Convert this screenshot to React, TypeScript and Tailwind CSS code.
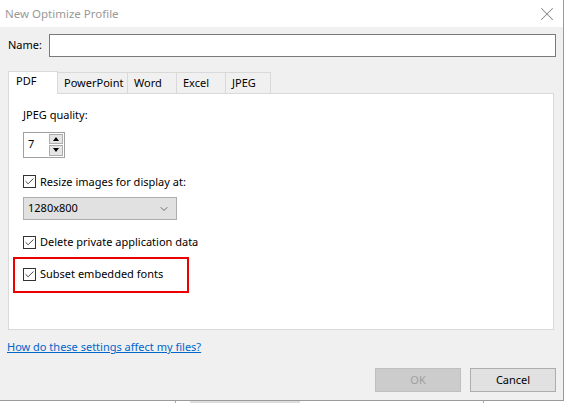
import { X, ChevronDown, Check } from "lucide-react";

const font = { fontFamily: '"Noto Sans", "Open Sans", sans-serif' };

function CheckBox({ label }: { label: string }) {
  return (
    <label className="flex items-center gap-[4px] text-[11px] text-[#000]">
      <span className="grid h-[13px] w-[13px] place-items-center border border-[#333] bg-white">
        <Check className="h-[11px] w-[11px] text-[#333]" strokeWidth={2} />
      </span>
      {label}
    </label>
  );
}

const tabs = ["PDF", "PowerPoint", "Word", "Excel", "JPEG"];
const tabWidths = ["w-[50px]", "w-[71px]", "w-[50px]", "w-[50px]", "w-[46px]"];

export default function App() {
  return (
    <div className="relative h-[403px] w-[565px] overflow-hidden bg-white" style={font}>
      <div className="flex h-[401px] w-[564px] flex-col border-r border-b border-[#9a9a9a] bg-[#f0f0f0]">
        {/* title bar */}
        <div className="flex h-[27px] items-center justify-between bg-white pl-[5px] pr-[5px]">
          <span className="text-[11.5px] text-[#999]">New Optimize Profile</span>
          <X className="h-[22px] w-[22px] text-[#888]" strokeWidth={1.1} />
        </div>

        {/* name */}
        <div className="mt-[7px] flex items-center pl-[8px] pr-[7px]">
          <span className="w-[41px] text-[11px] text-black">Name:</span>
          <div className="h-[23px] flex-1 border border-[#7a7a7a] bg-white" />
        </div>

        {/* tabs */}
        <div className="mx-[8px] mt-[14px] flex items-end">
          {tabs.map((t, i) => (
            <div
              key={t}
              className={
                i === 0
                  ? `${tabWidths[i]} relative z-10 -mb-px h-[23px] border border-b-0 border-[#d9d9d9] bg-white pl-[7px] pt-[1px] text-[11px] text-black`
                  : `${tabWidths[i]} -ml-px h-[21px] border border-b-0 border-[#d9d9d9] bg-[#f0f0f0] pl-[6px] pt-[2px] text-[11px] text-black`
              }
            >
              {t}
            </div>
          ))}
        </div>
        <div className="mx-[8px] mr-[9px] flex h-[237px] flex-col border border-[#d9d9d9] bg-white pl-[14px] pt-[13px]">
          <span className="text-[11px] text-black">JPEG quality:</span>
          <div className="mt-[8px] flex h-[26px] w-[42px] border border-[#a0a0a0] bg-white">
            <span className="flex flex-1 items-center pl-[4px] text-[11px] text-black">7</span>
            <div className="my-[1px] mr-[1px] flex w-[14px] flex-col gap-px">
              <div className="grid flex-1 place-items-center border border-[#acacac] bg-[#e5e5e5]">
                <span className="h-0 w-0 border-x-[3px] border-b-[4px] border-x-transparent border-b-black" />
              </div>
              <div className="grid flex-1 place-items-center border border-[#acacac] bg-[#e5e5e5]">
                <span className="h-0 w-0 border-x-[3px] border-t-[4px] border-x-transparent border-t-black" />
              </div>
            </div>
          </div>

          <div className="mt-[16px]">
            <CheckBox label="Resize images for display at:" />
          </div>
          <div className="mt-[7px] flex h-[23px] w-[154px] items-center justify-between border border-[#adadad] bg-[#e1e1e1] pl-[4px] pr-[6px] text-[11px] text-black">
            1280x800
            <ChevronDown className="h-[12px] w-[12px] text-[#444]" strokeWidth={1.5} />
          </div>

          <div className="mt-[14px]">
            <CheckBox label="Delete private application data" />
          </div>
          <div className="-ml-[10px] mt-[6px] flex h-[36px] w-[176px] items-center border-2 border-[#ee0000] pl-[8px]">
            <CheckBox label="Subset embedded fonts" />
          </div>
        </div>

        {/* footer */}
        <div className="mt-[3px] pl-[7px]">
          <a className="text-[11px] text-[#0066cc] underline">How do these settings affect my files?</a>
        </div>
        <div className="mt-auto mb-[8px] flex justify-end gap-[9px] pr-[7px]">
          <button className="h-[24px] w-[86px] border border-[#bfbfbf] bg-[#cccccc] text-[11px] text-[#a0a0a0]">
            OK
          </button>
          <button className="h-[24px] w-[86px] border border-[#adadad] bg-[#e1e1e1] text-[11px] text-black">
            Cancel
          </button>
        </div>
      </div>
      {/* app behind the dialog */}
      <div className="flex h-[2px] w-[565px] bg-white">
        <div className="ml-[175px] h-full w-px bg-[#aaa]" />
        <div className="ml-[14px] h-full w-[110px] bg-[#ddd]" />
        <div className="ml-[183px] h-full w-px bg-[#aaa]" />
      </div>
    </div>
  );
}
